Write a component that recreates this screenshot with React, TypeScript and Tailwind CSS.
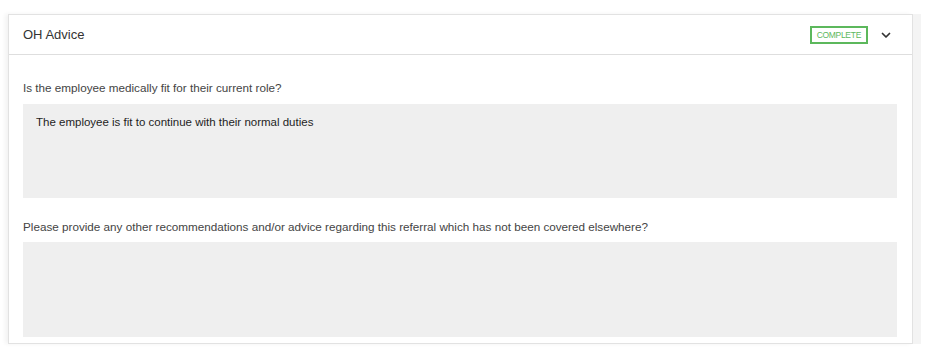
export default function App() {
  return (
    <main className="min-h-[352px] bg-white pt-[14px] pl-[8px] font-['Liberation_Sans',Arial,sans-serif]">
      <div className="w-[905px] border border-[#e2e2e2] bg-white shadow-[8px_0_0_#f4f4f4,-3px_0_4px_rgba(0,0,0,0.05)]">
        {/* header */}
        <div className="flex h-[40px] items-center justify-between border-b border-[#dedede] pl-[14px] pr-[20px]">
          <h2 className="text-[13px] text-[#333]">OH Advice</h2>
          <div className="flex items-center gap-[12px]">
            <span className="border-2 border-[#5cb85c] px-[5px] py-[2px] text-[8.5px] leading-[10px] tracking-[-0.3px] text-[#5cb85c]">
              COMPLETE
            </span>
            <svg width="12" height="12" viewBox="0 0 24 24" fill="none" stroke="#333" strokeWidth="3.5" strokeLinecap="round" strokeLinejoin="round">
              <path d="M5 9l7 7 7-7" />
            </svg>
          </div>
        </div>

        {/* body */}
        <div className="flex flex-col pl-[14px] pr-[15px] pt-[25px] pb-[6px]">
          <label className="text-[11.7px] leading-[15px] text-[#444]">
            Is the employee medically fit for their current role?
          </label>
          <div className="mt-[9px] h-[94px] bg-[#efefef] px-[13px] py-[11px] text-[11.5px] leading-[15px] text-[#1e1e1e]">
            The employee is fit to continue with their normal duties
          </div>

          <label className="mt-[21px] text-[11.7px] leading-[15px] text-[#444]">
            Please provide any other recommendations and/or advice regarding this referral which has not been covered elsewhere?
          </label>
          <div className="mt-[8px] h-[95px] bg-[#efefef]" />
        </div>
      </div>
    </main>
  );
}
